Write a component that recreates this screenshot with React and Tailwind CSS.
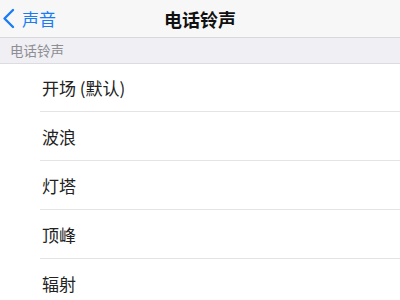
const ringtones = ['开场 (默认)', '波浪', '灯塔', '顶峰', '辐射']

export default function App() {
  return (
    <div className="w-[400px] h-[300px] overflow-hidden bg-white"
      style={{ fontFamily: '"Noto Sans CJK SC", "Liberation Sans", sans-serif' }}>
      {/* Nav bar */}
      <div className="relative h-[38px] flex items-center bg-[#f7f7f8] border-b border-[#d8d8dc]">
        <div className="flex items-center pl-[2px] text-[#1a7cf5]">
          <svg width="13" height="21" viewBox="0 0 13 21" fill="none">
            <path d="M11 2L2.5 10.5L11 19" stroke="currentColor" strokeWidth="2.4" strokeLinecap="round" strokeLinejoin="round" />
          </svg>
          <span className="ml-[7px] text-[17px] leading-none">声音</span>
        </div>
        <div className="absolute inset-0 flex items-center justify-center pointer-events-none">
          <span className="text-[18px] font-bold text-[#111] leading-none">电话铃声</span>
        </div>
      </div>

      {/* Section header */}
      <div className="h-[26px] bg-[#efeff4] border-b border-[#dcdce0] flex items-center pl-[10px]">
        <span className="text-[13.5px] text-[#8e8e93] leading-none">电话铃声</span>
      </div>

      {/* List */}
      <div className="pl-[40px]">
        {ringtones.map((name, i) => (
          <div key={name}
            className={`${i === 0 ? 'h-[48px]' : 'h-[49px]'} flex items-center pl-[2px] ${i < ringtones.length - 1 ? 'border-b border-[#e4e4e6]' : ''}`}>
            <span className="text-[17px] text-[#222] leading-none">{name}</span>
          </div>
        ))}
      </div>
    </div>
  )
}
